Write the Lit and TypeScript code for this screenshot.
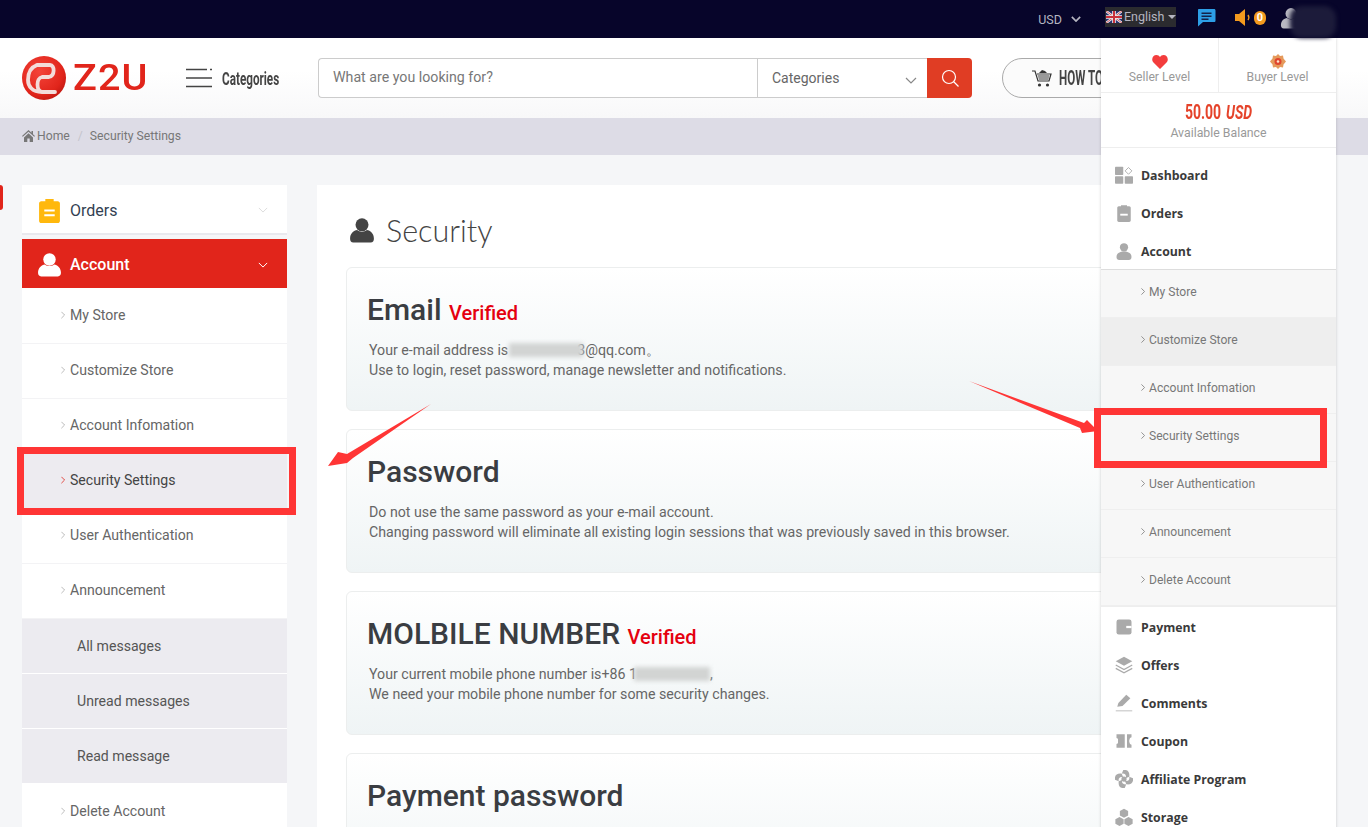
import { LitElement, html, css, svg } from 'lit';
import { customElement } from 'lit/decorators.js';

// small icon helpers, all drawn on a 24 box unless noted
const chevron = (cls = '') => html`<svg class="chev ${cls}" viewBox="0 0 12 7"><path d="M1 1l5 5 5-5" fill="none" stroke="currentColor" stroke-width="1.2"/></svg>`;
const person = (cls = '') => html`<svg class="${cls}" viewBox="0 0 24 24"><circle cx="12" cy="7.2" r="6" fill="currentColor"/><path d="M1 20c0-5 3.500-7.500 6.500-8 1.300 1 2.800 1.500 4.500 1.500s3.200-.5 4.500-1.500c3 .5 6.500 3 6.500 8 0 2-1 3.500-3 3.500H4c-2 0-3-1.500-3-3.500z" fill="currentColor"/></svg>`;
const clipboard = (cls = '', bar = '#fff') => html`<svg class="${cls}" viewBox="0 0 24 24"><path d="M4 3h4V1h8v2h4c1 0 2 1 2 2v17c0 1-1 2-2 2H4c-1 0-2-1-2-2V5c0-1 1-2 2-2z" fill="currentColor"/><path d="M7 11h10v2H7zM7 15.500h10v2H7z" fill="${bar}"/></svg>`;

const menuIcons: Record<string, unknown> = {
  dashboard: svg`<rect x="0" y="1" width="11" height="11" rx="1"/><rect x="0" y="13.500" width="11" height="10" rx="1"/><rect x="13" y="13.500" width="11" height="10" rx="1"/><path d="M18 2l4.500 4.500-4.500 4.500-4.500-4.500z" fill="none" stroke="#aaa" stroke-width="1.200"/>`,
  orders: svg`<path d="M5 3h3V1.500h8V3h3c1 0 2 1 2 2v17c0 1-1 2-2 2H5c-1 0-2-1-2-2V5c0-1 1-2 2-2z"/><path d="M7 13h10v2.500H7z" fill="#fff"/>`,
  account: svg`<circle cx="12" cy="7" r="5.500"/><path d="M2 20c0-5 4-7.500 10-7.500s10 2.500 10 7.500c0 2.500-1.500 4-3.500 4h-13C3.500 24 2 22.500 2 20z"/>`,
  payment: svg`<rect x="2" y="2" width="20" height="20" rx="3"/><path d="M15 10.500h7v3h-7z" fill="#fff"/>`,
  offers: svg`<path d="M12 1l11 6-11 6L1 7z"/><path d="M1 12l11 6 11-6M1 16.500l11 6 11-6" fill="none" stroke="#aaa" stroke-width="1.600"/>`,
  comments: svg`<path d="M3 17l1.500-5L15 1l5.500 4.500L10 16z"/><path d="M1 22h22v1H1z"/>`,
  coupon: svg`<path d="M2 3h11v18H2v-5l2-1v-6l-2-1zM16 3h6v4l-2 1-1 3v2l1 3 2 1v4h-6z"/>`,
  affiliate: svg`<circle cx="12" cy="12" r="3.500"/><path d="M11 0c6-1 9 3 8 9l-5 2c2-4-1-7-5-6zM24 11c1 6-3 9-9 8l-2-5c4 2 7-1 6-5zM13 24c-6 1-9-3-8-9l5-2c-2 4 1 7 5 6zM0 13c-1-6 3-9 9-8l2 5c-4-2-7 1-6 5z"/>`,
  storage: svg`<path d="M12 1l5.500 3v6L12 13l-5.500-3V4zM6 12l5.500 3v6L6 24 .5 21v-6zM18 12l5.500 3v6L18 24l-5.500-3v-6z"/>`,
};

const leftSub = ['My Store', 'Customize Store', 'Account Infomation', 'Security Settings', 'User Authentication', 'Announcement'];
const leftMsgs = ['All messages', 'Unread messages', 'Read message'];
const dropSub = ['My Store', 'Customize Store', 'Account Infomation', 'Security Settings', 'User Authentication', 'Announcement', 'Delete Account'];
const dropLower = [
  ['Payment', 'payment'], ['Offers', 'offers'], ['Comments', 'comments'],
  ['Coupon', 'coupon'], ['Affiliate Program', 'affiliate'], ['Storage', 'storage'],
];

@customElement('app-root')
export class AppRoot extends LitElement {
  static styles = css`
    :host {
      display: block;
      position: relative;
      width: 1368px;
      height: 827px;
      overflow: hidden;
      background: #f5f6f8;
      font-family: Roboto, "Liberation Sans", sans-serif;
      color: #666;
    }
    svg { display: block; flex: none; }

    /* top bar */
    .topbar {
      height: 38px;
      background: #07052a;
      display: flex;
      justify-content: flex-end;
      align-items: center;
      color: #b5b5c0;
      font-size: 12.500px;
      padding-right: 73px;
    }
    .usd { display: flex; align-items: center; gap: 9px; }
    .usd .chev { width: 10px; height: 6px; }
    .usd .chev path { stroke-width: 2; }
    .lang {
      margin-left: 24px;
      height: 20px;
      width: 71px;
      margin-top: -4px;
      background: #2b2b2f;
      display: flex;
      align-items: center;
      font-size: 12.500px;
      padding: 0 0 2px 1px;
      box-sizing: border-box;
      gap: 2px;
    }
    .flag { width: 16px; height: 12px; margin-top: 2px; }
    .caret { width: 0; height: 0; border: 4px solid transparent; border-top-color: #b5b5c0; border-bottom: 0; margin-left: 2px; margin-top: 2px; }
    .chat { width: 19px; height: 19px; margin-left: 21px; margin-top: -3px; }
    .sound { width: 17px; height: 17px; margin-left: 19px; margin-top: -3px; }
    .zero {
      width: 12px; height: 14px; border-radius: 6px; background: #f39a1e; color: #fff;
      font-size: 11px; font-weight: 700; text-align: center; line-height: 14px; margin-left: 2px; margin-top: -3px;
    }
    .me { width: 22px; height: 22px; margin-left: 14px; margin-right: -7px; margin-top: -2px; color: #b9b9c2; }

    /* header */
    .header {
      height: 80px;
      box-sizing: border-box;
      background: linear-gradient(#fff 40%, #f8f8f9);
      display: flex;
      align-items: center;
      padding-left: 22px;
      white-space: nowrap;
    }
    .logo { display: flex; align-items: center; width: 164px; }
    .logo svg { width: 44px; height: 44px; }
    .logo span {
      color: #e1251b; font-size: 37px; font-weight: 500; letter-spacing: 1px; line-height: 40px;
      display: inline-block; margin-left: 7px; transform: scaleX(1.07); transform-origin: left center;
    }
    .burger { width: 26px; height: 20px; }
    .cats {
      width: 96px; margin-left: 10px; font-size: 18px; font-weight: 700; color: #444;
      display: inline-block; transform: scaleX(.65); transform-origin: left center;
    }
    .search { height: 40px; width: 654px; display: flex; box-sizing: border-box; }
    .field {
      width: 439px; box-sizing: border-box; border: 1px solid #ccc; border-radius: 4px 0 0 4px; border-right: 0;
      padding-left: 14px; line-height: 37px; font-size: 14.200px; color: #777; background: #fff;
    }
    .select {
      width: 170px; box-sizing: border-box; border: 1px solid #ccc; border-right: 0; padding: 0 10px 1px 14px;
      display: flex; align-items: center; justify-content: space-between; font-size: 14px; color: #666; background: #fff;
    }
    .select .chev { width: 12px; height: 7px; color: #888; margin-top: 6px; }
    .go { width: 45px; background: #e03d24; border-radius: 0 4px 4px 0; display: flex; align-items: center; justify-content: center; }
    .go svg { width: 18px; height: 18px; }
    .howto {
      margin-left: 30px; height: 40px; width: 300px; box-sizing: border-box; border: 1px solid #aaa; border-radius: 20px;
      display: flex; align-items: center; padding-left: 29px; background: #fbfbfb;
    }
    .howto svg { width: 20px; height: 18px; }
    .howto span {
      margin-left: 7px; font-size: 20px; font-weight: 700; color: #444;
      display: inline-block; transform: scaleX(.58); transform-origin: left center;
    }

    .crumb {
      height: 37px; box-sizing: border-box; background: #dddce6; display: flex; align-items: center; padding: 0 0 2px 22px;
      font-size: 12.200px; color: #777;
    }
    .crumb svg { width: 13px; height: 12px; margin-right: 2px; color: #777; }
    .crumb i { font-style: normal; color: #c4c4cc; margin: 0 7px 0 8px; }

    /* main */
    .main { display: flex; align-items: flex-start; padding: 30px 0 0 22px; gap: 30px; }
    .side { width: 265px; flex: none; }
    .orders {
      height: 50px; box-sizing: border-box; background: #fff; border-bottom: 2px solid #e9e9ee; margin-bottom: 4px;
      display: flex; align-items: center; padding: 2px 19px 0 15px; font-size: 16px; color: #333f52;
    }
    .orders > svg:first-child { width: 25px; height: 25px; color: #ffb80d; margin-right: 8px; }
    .orders .chev, .active .chev { width: 10px; height: 6px; margin-left: auto; }
    .orders .chev { color: #ddd; }
    .active {
      height: 49px; box-sizing: border-box; background: #e1251b; color: #fff; display: flex; align-items: center;
      padding: 2px 19px 0 15px; font-size: 16px; font-weight: 500;
    }
    .active > svg:first-child { width: 25px; height: 25px; margin-right: 8px; }
    .sub {
      height: 55px; box-sizing: border-box; background: #fff; border-bottom: 1px solid #f3f3f5;
      display: flex; align-items: center; padding: 0 0 3px 39px; font-size: 14.100px; color: #666; gap: 5px;
    }
    .sub.first { height: 56px; padding-bottom: 2px; }
    .sub.last { padding-bottom: 1px; }
    .sub svg { width: 4px; height: 8px; color: #aaa; }
    .sub.on { background: #edebf0; color: #444; }
    .sub.on svg { color: #e1251b; }
    .msg {
      height: 55px; box-sizing: border-box; background: #ecebf0; border-bottom: 1px solid #fff;
      display: flex; align-items: center; padding-left: 55px; font-size: 14.100px; color: #555;
    }
    .panel { width: 1019px; flex: none; background: #fff; height: 700px; box-sizing: border-box; padding: 0 0 0 29px; }
    h1 {
      margin: 0; height: 82px; display: flex; align-items: center; gap: 11px; padding: 8px 0 0 3px; box-sizing: border-box;
      font: 300 30.500px Lato, "Open Sans", sans-serif; color: #444;
    }
    h1 svg { width: 26px; height: 28px; color: #444; }
    .card {
      height: 144px; box-sizing: border-box; margin-bottom: 18px; border: 1px solid #eceeee; border-radius: 6px;
      background: linear-gradient(#fff, #eff4f5); padding: 24px 22px 0;
    }
    h2 { margin: 0 0 12px -2px; font-size: 30px; font-weight: 500; line-height: 36px; color: #3a3d42; white-space: nowrap; }
    h2 span { font-size: 20px; line-height: 1; color: #e5000f; }
    .card p { margin: 0; font-size: 14.200px; line-height: 20px; color: #666; white-space: nowrap; }
    .blur { display: inline-block; height: 14px; background: #d2d4d3; filter: blur(2px); vertical-align: -2px; }

    /* account dropdown */
    .drop {
      position: absolute; left: 1101px; top: 38px; width: 235px; height: 800px; background: #fff;
      box-shadow: 0 0 3px rgba(0, 0, 0, .18); color: #999;
    }
    .levels { display: flex; height: 54px; border-bottom: 1px solid #eee; }
    .levels div {
      flex: 1; display: flex; flex-direction: column; align-items: center; justify-content: flex-end;
      padding-bottom: 8px; font-size: 12.200px; color: #999; gap: 1px;
    }
    .levels div + div { border-left: 1px solid #eee; }
    .levels svg { width: 16px; height: 15px; }
    .balance { height: 55px; border-bottom: 1px solid #eee; text-align: center; box-sizing: border-box; padding-top: 9px; font-size: 12.300px; }
    .balance b {
      display: block; font-size: 20px; line-height: 20px; margin-bottom: 4px; color: #e5432a; transform: scaleX(.7);
    }
    .balance em { font-style: italic; margin-left: 2px; }
    .rows { padding-top: 8px; }
    .row {
      height: 38px; display: flex; align-items: center; padding-left: 14px; gap: 8px;
      font: 700 12.300px "Open Sans", sans-serif; color: #3a3a3a;
    }
    .row svg { width: 18px; height: 18px; fill: #aaa; }
    .dsub { background: #f7f7f7; border-top: 1px solid #ddd; margin-top: -1px; border-bottom: 1px solid #eee; margin-bottom: 1px; }
    .drow {
      height: 48px; box-sizing: border-box; padding: 0 0 4px 40px; display: flex; align-items: center; gap: 4px;
      font-size: 12.100px; color: #777; border-bottom: 1px solid #efefef;
    }
    .drow.hot { background: #eeeeee; }
    .drow svg { width: 4px; height: 7px; color: #777; }

    /* scribble over the screenshot */
    .mark { position: absolute; border: 7px solid #ff3535; box-sizing: border-box; }
    .mark.a { left: 17px; top: 447px; width: 279px; height: 68px; }
    .mark.b { left: 1094px; top: 408px; width: 233px; height: 60px; }
    .arrows { position: absolute; left: 0; top: 0; width: 1368px; height: 827px; pointer-events: none; }
    .tab { position: absolute; left: 0; top: 185px; width: 3px; height: 25px; background: #e1251b; border-radius: 0 3px 3px 0; }
    .mask { position: absolute; left: 1290px; top: 6px; width: 46px; height: 32px; background: #1c1b3a; border-radius: 12px; filter: blur(2px); }
  `;

  private arrowRight() {
    return html`<svg viewBox="0 0 5 9"><path d="M.5.5l4 4-4 4" fill="none" stroke="currentColor"/></svg>`;
  }

  private renderTopbar() {
    return html`
      <div class="topbar">
        <div class="usd">USD ${chevron()}</div>
        <div class="lang">
          <svg class="flag" viewBox="0 0 16 12">
            <rect width="16" height="12" fill="#27306e"/>
            <path d="M0 0l16 12M16 0L0 12" stroke="#eee" stroke-width="2.400"/>
            <path d="M0 0l16 12M16 0L0 12" stroke="#c8323c" stroke-width=".8"/>
            <path d="M8 0v12M0 6h16" stroke="#eee" stroke-width="3.600"/>
            <path d="M8 0v12M0 6h16" stroke="#c8323c" stroke-width="2"/>
          </svg>
          English<span class="caret"></span>
        </div>
        <svg class="chat" viewBox="0 0 19 19">
          <path d="M2 1h15c1 0 1.500.6 1.500 1.500v10c0 1-.5 1.500-1.500 1.500H6l-5 4.500V2.500C1 1.600 1 1 2 1z" fill="#2d9fe6"/>
          <path d="M4.500 4.500h10v1.500h-10zM4.500 7.500h10V9h-10zM4.500 10.500h7V12h-7z" fill="#13224a"/>
        </svg>
        <svg class="sound" viewBox="0 0 17 17">
          <path d="M0 5h4l6-5v17l-6-5H0z" fill="#f39a1e"/>
          <path d="M13 6c1 1.500 1 3.500 0 5" fill="none" stroke="#f39a1e" stroke-width="1.400"/>
        </svg>
        <div class="zero">0</div>
        ${person('me')}
      </div>
    `;
  }

  private renderHeader() {
    return html`
      <div class="header">
        <div class="logo">
          <svg viewBox="0 0 44 44">
            <defs>
              <radialGradient id="lg" cx=".4" cy=".35" r=".75">
                <stop offset="0" stop-color="#f4443a"/>
                <stop offset=".7" stop-color="#e1251b"/>
                <stop offset="1" stop-color="#b8150f"/>
              </radialGradient>
            </defs>
            <circle cx="22" cy="22" r="22" fill="url(#lg)"/>
            <path d="M15 9H28C33 9 33 20 27 21H20C14 22 14 35 20 36H33M15 9C7 12 6 20 6 24C6 30 10 36 20 36" fill="none" stroke="#f3dcda" stroke-width="3.800" stroke-linecap="round"/>
          </svg>
          <span>Z2U</span>
        </div>
        <svg class="burger" viewBox="0 0 26 20">
          <path d="M0 1.500h21M24 1.500h2M0 10h26M0 18.500h26" stroke="#444" stroke-width="1.400"/>
        </svg>
        <span class="cats">Categories</span>
        <div class="search">
          <div class="field">What are you looking for?</div>
          <div class="select">Categories ${chevron()}</div>
          <div class="go">
            <svg viewBox="0 0 18 18"><circle cx="8" cy="8" r="6.500" fill="none" stroke="#fff" stroke-width="1.200"/><path d="M12.500 12.500l5 5" stroke="#fff" stroke-width="1.200"/></svg>
          </div>
        </div>
        <div class="howto">
          <svg viewBox="0 0 20 18">
            <path d="M0 2h3l3 10h11l2-7H5" fill="none" stroke="#333" stroke-width="1.200"/>
            <path d="M7 4l3-3 3 1 2 2z" fill="#333"/>
            <path d="M5.500 6h12l-1 5H7z" fill="#999"/>
            <circle cx="7.500" cy="16" r="1.600" fill="#333"/><circle cx="15.500" cy="16" r="1.600" fill="#333"/>
          </svg>
          <span>HOW TO</span>
        </div>
      </div>
      <div class="crumb">
        <svg viewBox="0 0 13 12"><path d="M6.500 0L0 6l.8.8L6.500 1.700l5.700 5.100.8-.8-2-1.800V1H9.500v1.800zM2 7.500V12h3.300V8.500h2.400V12H11V7.500L6.500 3.300z" fill="currentColor"/></svg>
        Home<i>/</i>Security Settings
      </div>
    `;
  }

  private renderSide() {
    return html`
      <div class="side">
        <div class="orders">${clipboard('')}Orders ${chevron()}</div>
        <div class="active">${person('')}Account ${chevron()}</div>
        ${leftSub.map(
          (s, i) => html`<div class="sub ${s === 'Security Settings' ? 'on' : ''} ${i === 0 ? 'first' : ''}">${this.arrowRight()}${s}</div>`,
        )}
        ${leftMsgs.map((m) => html`<div class="msg">${m}</div>`)}
        <div class="sub last">${this.arrowRight()}Delete Account</div>
      </div>
    `;
  }

  private renderPanel() {
    return html`
      <div class="panel">
        <h1>${person('')}Security</h1>
        <div class="card">
          <h2>Email <span>Verified</span></h2>
          <p>Your e-mail address is<span class="blur" style="width:74px;margin:0 -6px 0 1px"></span>3@qq.com。</p>
          <p>Use to login, reset password, manage newsletter and notifications.</p>
        </div>
        <div class="card">
          <h2>Password</h2>
          <p>Do not use the same password as your e-mail account.</p>
          <p>Changing password will eliminate all existing login sessions that was previously saved in this browser.</p>
        </div>
        <div class="card">
          <h2>MOLBILE NUMBER <span>Verified</span></h2>
          <p>Your current mobile phone number is+86 1<span class="blur" style="width:76px;margin:0 0 0 -3px"></span>,</p>
          <p>We need your mobile phone number for some security changes.</p>
        </div>
        <div class="card">
          <h2>Payment password</h2>
        </div>
      </div>
    `;
  }

  private renderDrop() {
    const row = (label: string, icon: string) => html`
      <div class="row"><svg viewBox="0 0 24 24">${menuIcons[icon]}</svg>${label}</div>
    `;
    return html`
      <div class="drop">
        <div class="levels">
          <div>
            <svg viewBox="0 0 16 15"><path d="M8 15L1 8C-1 5 1 1 4.500 1 6 1 7.200 1.800 8 3c.8-1.200 2-2 3.500-2C15 1 17 5 15 8z" fill="#f33d3d"/></svg>
            Seller Level
          </div>
          <div>
            <svg viewBox="0 0 16 15">
              <path d="M8 0l2 2 3-.5.5 3L16 7.500l-2.500 3-.5 3-3-.5-2 2-2-2-3 .5-.5-3L0 7.500l2.500-3 .5-3L6 2z" fill="#e59a5c"/>
              <circle cx="8" cy="7.500" r="3.500" fill="#e0452e"/><circle cx="8" cy="7.500" r="1.300" fill="#fbe3c8"/>
            </svg>
            Buyer Level
          </div>
        </div>
        <div class="balance">
          <b>50.00 <em>USD</em></b>
          Available Balance
        </div>
        <div class="rows">
          ${row('Dashboard', 'dashboard')}
          ${row('Orders', 'orders')}
          ${row('Account', 'account')}
          <div class="dsub">
            ${dropSub.map(
              (s) => html`<div class="drow ${s === 'Customize Store' ? 'hot' : ''}">${this.arrowRight()}${s}</div>`,
            )}
          </div>
          ${dropLower.map(([label, icon]) => row(label, icon))}
        </div>
      </div>
    `;
  }

  render() {
    return html`
      ${this.renderTopbar()}
      ${this.renderHeader()}
      <div class="main">
        ${this.renderSide()}
        ${this.renderPanel()}
      </div>
      ${this.renderDrop()}
      <div class="mask"></div>
      <div class="tab"></div>
      <div class="mark a"></div>
      <div class="mark b"></div>
      <svg class="arrows" viewBox="0 0 1368 827">
        <polygon points="431,404 347,454 338,452 328,466 347,463 353,458" fill="#ff3535"/>
        <polygon points="969,381 1084,423 1087,420 1098,431 1082,433 1080,428" fill="#ff3535"/>
      </svg>
    `;
  }
}
